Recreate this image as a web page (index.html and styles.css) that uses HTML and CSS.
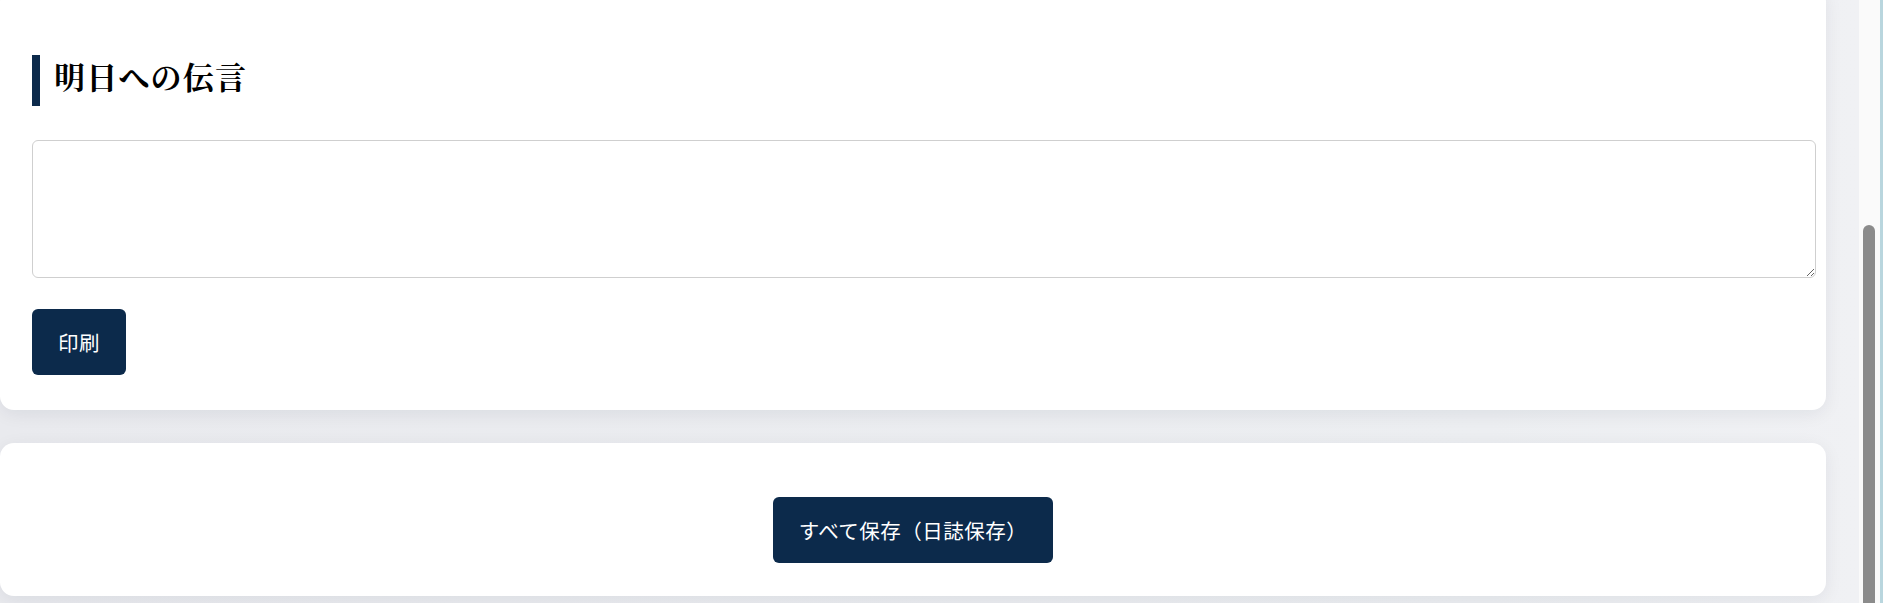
FILE: index.html
```html
<!DOCTYPE html>
<html lang="ja">
<head>
<meta charset="utf-8">
<title>明日への伝言</title>
<link rel="stylesheet" href="styles.css">
</head>
<body>
<div class="page">
  <main class="content">
    <section class="card card-message">
      <h2 class="section-title">明日への伝言</h2>
      <textarea class="memo"></textarea>
      <button class="btn" type="button">印刷</button>
    </section>
    <section class="card card-save">
      <button class="btn" type="button">すべて保存（日誌保存）</button>
    </section>
  </main>
  <div class="scrollbar"><div class="scroll-track"><div class="scroll-thumb"></div></div><div class="scroll-edge"></div></div>
</div>
</body>
</html>
```
FILE: styles.css
```css
html, body {
  margin: 0;
  padding: 0;
  height: 100%;
  overflow: hidden;
}
body {
  background: #eceef1;
  font-family: "Noto Sans CJK JP", "Noto Sans", sans-serif;
}
.page {
  display: flex;
  height: 603px;
  width: 1883px;
}
.content {
  width: 1859px;
  flex: none;
  background: linear-gradient(90deg, #e9eaee 0%, #eceef1 80%, #f0f1f4 100%);
  margin-top: -12px;
}
.card {
  width: 1826px;
  box-sizing: border-box;
  background: #ffffff;
  border-radius: 14px;
  box-shadow: 0 4px 18px rgba(20, 30, 50, 0.07);
}
.card-message {
  padding: 67px 10px 35px 32px;
}
.section-title {
  margin: 0 0 34px 0;
  height: 51px;
  box-sizing: border-box;
  display: flex;
  align-items: center;
  border-left: 8px solid #0c2a4b;
  padding-left: 14px;
  padding-bottom: 10px;
  font-family: "Noto Serif CJK JP", "Liberation Serif", serif;
  font-size: 31px;
  letter-spacing: 1.2px;
  font-weight: 700;
  color: #000000;
}
.memo {
  display: block;
  width: 1784px;
  height: 138px;
  box-sizing: border-box;
  border: 1px solid #cfcfcf;
  border-radius: 6px;
  margin: 0 0 31px 0;
  padding: 8px;
  font-family: inherit;
  font-size: 16px;
  background: #ffffff;
}
.btn {
  display: inline-flex;
  align-items: center;
  height: 66px;
  padding: 0 26px;
  border: none;
  border-radius: 6px;
  background: #0c2a4b;
  color: #ffffff;
  font-family: "Noto Sans CJK JP", "Noto Sans", sans-serif;
  font-size: 20.5px;
  letter-spacing: 0.5px;
  font-weight: 400;
  cursor: pointer;
}
.card-save {
  margin-top: 33px;
  padding: 54px 0 33px 0;
  display: flex;
  justify-content: center;
}
.scrollbar {
  flex: none;
  width: 24px;
  display: flex;
  background: #fafafa;
}
.scroll-track {
  width: 21px;
  padding-top: 225px;
  display: flex;
  justify-content: center;
  box-sizing: border-box;
}
.scroll-thumb {
  width: 12px;
  height: 400px;
  background: #8b8b8b;
  border-radius: 6px 6px 0 0;
  margin-left: -2px;
}
.scroll-edge {
  width: 3px;
  background: #b9d6de;
}
```
